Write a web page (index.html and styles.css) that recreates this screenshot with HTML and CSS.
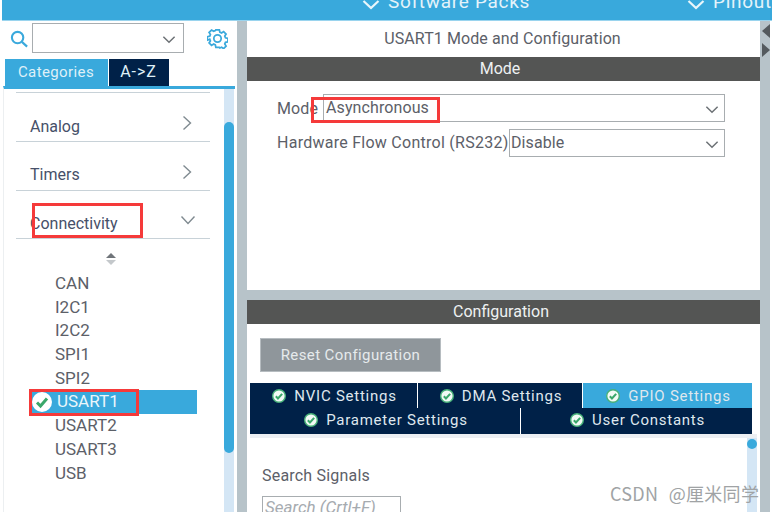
FILE: index.html
```html
<!DOCTYPE html>
<html lang="en">
<head>
<meta charset="utf-8">
<title>USART1 Mode and Configuration</title>
<link rel="stylesheet" href="styles.css">
</head>
<body>
<div class="app">
  <header class="topbar">
    <div class="nav nav-packs"><svg class="nav-chev" viewBox="0 0 18 10"><path d="M1.5 1 9 8l7.500-7"/></svg><span>Software Packs</span></div>
    <div class="nav nav-pinout"><svg class="nav-chev" viewBox="0 0 18 10"><path d="M1.500 1 9 8l7.500-7"/></svg><span>Pinout</span></div>
  </header>
  <div class="main">
    <aside class="sidebar">
      <div class="search-row">
        <svg class="search-icon" viewBox="0 0 20 20"><circle cx="8" cy="8" r="6"/><path d="m12.500 12.500 5.500 5"/></svg>
        <div class="combo"><svg class="chev" viewBox="0 0 12 8"><path d="M1 1.500 6 6.500l5-5"/></svg></div>
        <svg class="gear" viewBox="0 0 24 24"><path d="M10 2h4l.6 2.800 1.900.8 2.400-1.500 2.800 2.800-1.500 2.400.8 1.900 2.800.6v4l-2.800.6-.8 1.900 1.500 2.400-2.800 2.800-2.400-1.500-1.900.8L14 22h-4l-.6-2.800-1.900-.8-2.400 1.500-2.800-2.800 1.500-2.400-.8-1.900L.2 14v-4l2.800-.6.8-1.900-1.500-2.400 2.800-2.800 2.400 1.500 1.900-.8z" transform="translate(.1 0)"/><circle cx="12" cy="12" r="4.200"/></svg>
      </div>
      <div class="tabs">
        <div class="tab tab-active">Categories</div>
        <div class="tab tab-dark">A-&gt;Z</div>
      </div>
      <div class="tree">
        <div class="tree-body">
          <div class="cat cat-first"><span>Analog</span><svg class="cat-arrow" viewBox="0 0 10 16"><path d="m1.500 1.500 7 6.500-7 6.500"/></svg></div>
          <div class="cat cat-mid"><span>Timers</span><svg class="cat-arrow" viewBox="0 0 10 16"><path d="m1.500 1.500 7 6.500-7 6.500"/></svg></div>
          <div class="cat cat-last"><span>Connectivity</span><svg class="cat-arrow cat-open" viewBox="0 0 16 10"><path d="m1.500 1.500 6.500 7 6.500-7"/></svg></div>
          <div class="sorter"><i class="sort-up"></i><i class="sort-down"></i></div>
          <ul class="items">
            <li>CAN</li>
            <li>I2C1</li>
            <li>I2C2</li>
            <li>SPI1</li>
            <li>SPI2</li>
            <li class="item-selected"><svg class="ok ok-large" viewBox="0 0 20 20"><circle cx="10" cy="10" r="10"/><path d="m5 10.500 3.500 3.500 6.500-7.500"/></svg>USART1</li>
            <li>USART2</li>
            <li>USART3</li>
            <li>USB</li>
          </ul>
        </div>
        <div class="vscroll"><div class="vthumb"></div></div>
        <div class="mark mark-conn"></div>
        <div class="mark mark-usart"></div>
      </div>
    </aside>
    <div class="splitter"></div>
    <section class="content">
      <div class="panel panel-mode">
        <h1 class="title">USART1 Mode and Configuration</h1>
        <div class="bar">Mode</div>
        <div class="form">
          <div class="form-row">
            <label class="form-label label-mode">Mode</label>
            <div class="select select-wide">Asynchronous<svg class="chev" viewBox="0 0 12 8"><path d="M1 1.500 6 6.500l5-5"/></svg></div>
          </div>
          <div class="form-row">
            <label class="form-label label-flow">Hardware Flow Control (RS232)</label>
            <div class="select select-short">Disable<svg class="chev" viewBox="0 0 12 8"><path d="M1 1.500 6 6.500l5-5"/></svg></div>
          </div>
        </div>
        <div class="mark mark-async"></div>
      </div>
      <div class="panel panel-config">
        <div class="bar bar-config">Configuration</div>
        <button class="reset">Reset Configuration</button>
        <div class="cfg-tabs">
          <div class="cfg-row cfg-row-top">
            <div class="cfg-tab cfg-nvic"><svg class="ok" viewBox="0 0 20 20"><circle cx="10" cy="10" r="9"/><path d="m5.500 10.500 3 3 6-6.500"/></svg>NVIC Settings</div>
            <div class="cfg-tab cfg-dma"><svg class="ok" viewBox="0 0 20 20"><circle cx="10" cy="10" r="9"/><path d="m5.500 10.500 3 3 6-6.500"/></svg>DMA Settings</div>
            <div class="cfg-tab cfg-gpio"><svg class="ok" viewBox="0 0 20 20"><circle cx="10" cy="10" r="9"/><path d="m5.500 10.500 3 3 6-6.500"/></svg>GPIO Settings</div>
          </div>
          <div class="cfg-row cfg-row-bottom">
            <div class="cfg-tab cfg-param"><svg class="ok" viewBox="0 0 20 20"><circle cx="10" cy="10" r="9"/><path d="m5.500 10.500 3 3 6-6.500"/></svg>Parameter Settings</div>
            <div class="cfg-tab cfg-user"><svg class="ok" viewBox="0 0 20 20"><circle cx="10" cy="10" r="9"/><path d="m5.500 10.500 3 3 6-6.500"/></svg>User Constants</div>
          </div>
        </div>
        <div class="signals">
          <div class="signals-body">
            <div class="signals-label">Search Signals</div>
            <div class="signals-input">Search (Crtl+F)</div>
          </div>
          <div class="signals-scroll"><div class="signals-dot"></div></div>
        </div>
      </div>
    </section>
    <div class="edge">
      <i class="edge-left"></i>
      <i class="edge-right"></i>
    </div>
  </div>
  <div class="watermark">CSDN @厘米同学</div>
</div>
</body>
</html>
```
FILE: styles.css
```css
* { box-sizing: border-box; }
html, body { margin: 0; padding: 0; background: #fff; }
body { width: 776px; height: 512px; overflow: hidden; font-family: Roboto, "Liberation Sans", sans-serif; color: #5a5f6a; }
.app { position: relative; width: 776px; height: 512px; overflow: hidden; display: flex; flex-direction: column; }

.topbar { height: 21px; flex: none; margin: 0 4px 0 2px; background: #39a9dc; border-bottom: 1px solid #9ad4ee; position: relative; overflow: hidden; display: flex; color: #e4f3fa; font-size: 19px; letter-spacing: .7px; }
.nav { display: flex; align-items: flex-start; height: 12px; gap: 8px; line-height: 20px; white-space: nowrap; }
.nav span { display: block; margin-top: -8px; }
.nav-packs { margin-left: 360px; }
.nav-pinout { margin-left: 157px; }
.nav-chev { width: 18px; height: 10px; flex: none; fill: none; stroke: #e9f6fb; stroke-width: 2.200; }

.main { flex: 1; display: flex; min-height: 0; }

.sidebar { width: 237px; flex: none; display: flex; flex-direction: column; padding-left: 3px; }
.search-row { height: 38px; flex: none; display: flex; align-items: flex-start; position: relative; padding: 2px 0 0 7px; }
.search-icon { width: 19px; height: 19px; margin-top: 7px; flex: none; fill: none; stroke: #3aa9dc; stroke-width: 2.200; }
.combo { width: 152px; height: 30px; margin-left: 3px; flex: none; border: 1px solid #a8adb0; background: #fff; position: relative; }
.combo .chev { right: 7px; top: 11px; }
.gear { width: 21px; height: 21px; margin: 5px 0 0 23px; flex: none; fill: none; stroke: #3aa9dc; stroke-width: 2; }

.chev { position: absolute; width: 14px; height: 9px; fill: none; stroke: #6c7175; stroke-width: 1.300; }

.tabs { height: 29px; flex: none; display: flex; padding-left: 2px; gap: 1px; }
.tab { height: 27px; font-size: 15px; letter-spacing: .4px; color: #dff0f8; line-height: 26px; text-align: center; padding-right: 1px; }
.tab-active { width: 103px; height: 29px; background: #39a9dc; }
.tab-dark { width: 60px; background: #002148; font-size: 16px; letter-spacing: .9px; }

.tree { flex: 1; min-height: 0; position: relative; display: flex; border-top: 3px solid #39a9dc; border-left: 1px solid #eceff1; margin-right: 2px; margin-top: -2px; }
.tree-body { width: 220px; flex: none; padding: 3px 0 0 12px; }
.cat { width: 194px; height: 49px; border-bottom: 1px solid #c8d2d8; display: flex; justify-content: space-between; align-items: flex-end; padding: 0 18px 4px 14px; font-size: 16px; line-height: 21px; color: #465069; }
.cat-first { border-top: 1px solid #c8d2d8; height: 50px; }
.cat-mid { padding-bottom: 5px; }
.cat-last { height: 48px; }
.cat-arrow { width: 10px; height: 16px; margin: 0 0 6px; fill: none; stroke: #7f8a90; stroke-width: 1.400; }
.cat-mid .cat-arrow { margin-bottom: 5px; }
.cat-open { width: 16px; height: 10px; margin: 0 -4px 9px 0; }
.sorter { height: 24px; padding: 14px 0 0 90px; display: flex; flex-direction: column; gap: 2px; }
.sorter i { display: block; width: 0; height: 0; border-left: 5px solid transparent; border-right: 5px solid transparent; }
.sort-up { border-bottom: 5px solid #70757a; }
.sort-down { border-top: 5px solid #c4c8cb; }
.items { list-style: none; margin: 9px 0 0 1px; padding: 0; width: 181px; font-size: 17px; }
.items li { height: 23.700px; line-height: 23.700px; padding-left: 38px; color: #5c6068; white-space: nowrap; }
.items .item-selected { width: 167px; margin-left: 13px; padding-left: 27px; background: #39a9dc; color: #eaf6fb; position: relative; }
.ok { width: 14px; height: 14px; flex: none; }
.ok circle { fill: #f2faf5; stroke: #46b078; stroke-width: 2; }
.ok path { fill: none; stroke: #3aa76a; stroke-width: 3; }
.ok-large { position: absolute; left: 2px; top: 2px; width: 20px; height: 20px; }
.ok-large circle { fill: #fff; stroke: none; }

.vscroll { width: 10px; flex: none; background: #d4e6f5; }
.vthumb { height: 331px; margin-top: 33px; background: #39a9dc; border-radius: 5px; }

.mark { position: absolute; border: 3px solid #f53a3a; pointer-events: none; }
.mark-conn { left: 28px; top: 114px; width: 111px; height: 35px; }
.mark-usart { left: 25px; top: 300px; width: 110px; height: 27px; }
.mark-async { left: 64px; top: 76px; width: 129px; height: 26px; }

.splitter { width: 10px; flex: none; background: #b7c3c9; }

.content { width: 513px; flex: none; display: flex; flex-direction: column; gap: 10px; background: #b7c3c9; }
.panel { background: #fff; position: relative; }
.panel-mode { height: 269px; flex: none; }
.title { margin: 0; height: 36px; font-size: 16px; font-weight: 400; letter-spacing: .1px; color: #5c6068; text-align: center; line-height: 35px; padding-right: 2px; }
.bar { height: 24px; background: #545554; color: #eef1f2; font-size: 16px; line-height: 23px; text-align: center; padding-right: 7px; }
.bar-config { padding-right: 5px; }
.form { padding: 13px 35px 0 30px; display: flex; flex-direction: column; gap: 7px; }
.form-row { display: flex; height: 28px; align-items: center; font-size: 16px; color: #5c6068; }
.form-label { white-space: nowrap; letter-spacing: .26px; position: relative; top: -1px; }
.label-mode { width: 46px; letter-spacing: .1px; top: 0; }
.label-flow { width: 232px; }
.select { position: relative; height: 28px; border: 1px solid #a8adb0; padding-left: 2px; line-height: 25px; letter-spacing: .1px; }
.select .chev { right: 5px; top: 10px; }
.select-wide { width: 402px; }
.select-short { width: 216px; padding-left: 1px; }

.panel-config { flex: 1; min-height: 0; display: flex; flex-direction: column; }
.reset { display: block; width: 181px; height: 34px; margin: 14px 0 0 13px; flex: none; border: 1px solid #b6bcc0; background: #8f969b; color: #e6eaec; font: 15px/1 Roboto, "Liberation Sans", sans-serif; letter-spacing: .4px; padding: 0; }
.cfg-tabs { margin: 11px 8px 0 3px; flex: none; display: flex; flex-direction: column; }
.cfg-row { display: flex; gap: 1px; }
.cfg-row-top { height: 25px; }
.cfg-row-bottom { height: 26px; }
.cfg-tab { background: #002148; color: #dfe7ee; font-size: 15px; letter-spacing: .75px; display: flex; align-items: center; justify-content: center; gap: 8px; white-space: nowrap; padding: 1px 0 0 2px; }
.cfg-row-bottom .cfg-tab { padding: 0 0 2px 2px; }
.cfg-nvic { width: 167px; }
.cfg-dma { width: 164px; }
.cfg-gpio { width: 169px; background: #39a9dc; }
.cfg-param { width: 270px; }
.cfg-user { width: 231px; }
.signals { flex: 1; min-height: 0; display: flex; margin: 0 3px 0 3px; border-top: 4px solid #eceff3; }
.signals-body { flex: 1; padding: 28px 0 0 12px; }
.signals-label { font-size: 16px; line-height: 20px; color: #5c6068; letter-spacing: .2px; }
.signals-input { width: 139px; height: 24px; margin-top: 10px; border: 1px solid #a8adb0; font-size: 17px; font-style: italic; color: #a6abb0; padding-left: 2px; line-height: 21px; white-space: nowrap; overflow: hidden; }
.signals-scroll { width: 10px; flex: none; background: #d4e6f5; }
.signals-dot { height: 10px; margin-top: 1px; border-radius: 50%; background: #39a9dc; }

.edge { width: 10px; flex: none; background: #b7c3c9; display: flex; flex-direction: column; padding: 3px 0 0 2px; gap: 5px; }
.edge i { display: block; width: 0; height: 0; border-top: 7px solid transparent; border-bottom: 7px solid transparent; }
.edge-left { border-right: 8px solid #545a5e; }
.edge-right { border-left: 8px solid #545a5e; }

.watermark { position: absolute; left: 610px; top: 481px; font: 18px/24px "Noto Sans CJK SC", Roboto, sans-serif; letter-spacing: .3px; word-spacing: 6px; color: #a0a3a5; white-space: nowrap; }
```
